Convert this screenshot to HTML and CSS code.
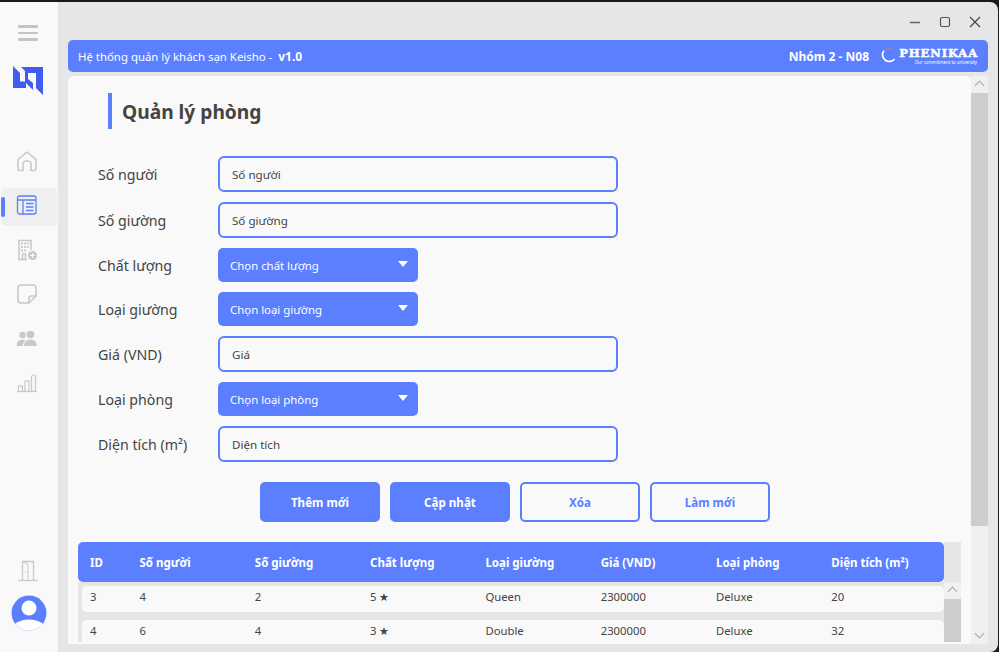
FILE: index.html
```html
<!DOCTYPE html>
<html lang="vi">
<head>
    <meta charset="UTF-8">
    <meta name="viewport" content="width=device-width, initial-scale=1.0">
    <title>Quản lý phòng</title>
    <link rel="stylesheet" href="styles.css">
</head>
<body>
    <div class="window">
        <aside class="sidebar">
            <div class="menu-btn"><span></span><span></span><span></span></div>
            <svg class="logo" width="30" height="30" viewBox="0 0 30 30">
                <path fill="#3f5bf0" d="M0 0 L7 7 V15.5 H13 V22 H0 Z"/>
                <path fill="#3f5bf0" d="M8 1 H30 V29 L23 22 V7 H15 V13 L20 17 V24 L12 16 V5 Z"/>
            </svg>
            <nav class="nav">
                <div class="nav-item">
                    <svg width="22" height="22" viewBox="0 0 22 22" fill="none" stroke="#c8c8c8" stroke-width="1.6"><path d="M2 9.5 L11 2 L20 9.5 V18.5 Q20 20.5 18 20.5 H15 V14 Q15 11 11 11 Q7 11 7 14 V20.5 H4 Q2 20.5 2 18.5 Z" stroke-linejoin="round"/></svg>
                </div>
                <div class="nav-item active">
                    <span class="marker"></span>
                    <svg width="22" height="22" viewBox="0 0 22 22" fill="none" stroke="#5b7fff" stroke-width="1.3"><rect x="1.5" y="2" width="18.5" height="18" rx="2"/><path d="M1.5 6 H20 M7 6 V20 M10 9.5 H17.5 M10 13 H17.5 M10 16.5 H17.5"/></svg>
                </div>
                <div class="nav-item">
                    <svg width="22" height="22" viewBox="0 0 22 22"><path fill="none" stroke="#c8c8c8" stroke-width="1.5" d="M11 20.5 H3 V1.5 H15 V11"/><path stroke="#c8c8c8" stroke-width="2" stroke-dasharray="2 1.2" d="M5 4.5 H13 M5 8 H13 M5 11.5 H11"/><path fill="none" stroke="#c8c8c8" stroke-width="1.5" d="M6.5 20 V15 H9.5 V20"/><circle cx="16.5" cy="16.5" r="4.5" fill="#c8c8c8"/><path stroke="#f9f9f9" stroke-width="1.2" d="M14 16.5 H19 M16.5 14 V19"/></svg>
                </div>
                <div class="nav-item">
                    <svg width="22" height="22" viewBox="0 0 22 22" fill="none" stroke="#c8c8c8" stroke-width="1.6" stroke-linejoin="round"><path d="M5 2 H17 Q20 2 20 5 V13 L13 20 H5 Q2 20 2 17 V5 Q2 2 5 2 Z"/><path d="M20 13 H15.5 Q13 13 13 15.5 V20"/></svg>
                </div>
                <div class="nav-item">
                    <svg width="22" height="22" viewBox="0 0 22 22" fill="#c8c8c8"><circle cx="6.5" cy="7" r="3.2"/><circle cx="14.5" cy="6.5" r="3.8"/><path d="M0.5 18 Q1 11.5 6.5 11.5 Q8.5 11.5 9.5 12.5 Q7 14.5 6.5 18 Z"/><path d="M8 18 Q8.5 11.5 14.5 11.5 Q20.5 11.5 21 18 Z"/></svg>
                </div>
                <div class="nav-item">
                    <svg width="22" height="22" viewBox="0 0 22 22" fill="none" stroke="#c8c8c8" stroke-width="1.2"><path d="M1 19.5 H21"/><rect x="2.5" y="14" width="4" height="5.5"/><rect x="9" y="9" width="4" height="10.5"/><rect x="15.5" y="3" width="4" height="16.5" rx="2"/></svg>
                </div>
            </nav>
            <div class="side-bottom">
                <svg width="22" height="22" viewBox="0 0 22 22" fill="none" stroke="#c8c8c8" stroke-width="1.3"><path d="M0.5 20.5 H19.5"/><path d="M4.5 20.5 V1.5 H15.5 V20.5"/><path d="M4.5 1.5 L10 4 V20.5" stroke-width="1"/><path d="M8 11 V12.5" stroke-width="1"/></svg>
                <svg class="avatar" width="36" height="36" viewBox="0 0 36 36">
                    <defs><clipPath id="av"><circle cx="18" cy="18" r="17.5"/></clipPath></defs>
                    <circle cx="18" cy="18" r="17.5" fill="#5b7fff"/>
                    <circle cx="18" cy="13" r="7.5" fill="#fff"/>
                    <ellipse cx="18" cy="35" rx="17" ry="10.5" fill="#fff" clip-path="url(#av)"/>
                </svg>
            </div>
        </aside>

        <main class="main">
            <div class="titlebar">
                <svg width="12" height="12" viewBox="0 0 12 12"><path stroke="#666" stroke-width="1.3" d="M1 6.5 H11"/></svg>
                <svg width="12" height="12" viewBox="0 0 12 12" fill="none"><rect x="1.5" y="1.5" width="9" height="9" rx="1.5" stroke="#555" stroke-width="1.2"/></svg>
                <svg width="12" height="12" viewBox="0 0 12 12"><path stroke="#444" stroke-width="1.2" d="M1 1 L11 11 M11 1 L1 11"/></svg>
            </div>
            <header class="app-header">
                <div class="app-title">Hệ thống quản lý khách sạn Keisho -&nbsp; <b>v1.0</b></div>
                <div class="app-right">
                    <b>Nhóm 2 - N08</b>
                    <div class="brand">
                        <svg width="16" height="16" viewBox="0 0 16 16" fill="none" stroke-width="1.7"><path stroke="#fff" d="M3 2.5 A6.5 6.5 0 1 0 13.5 11"/><path stroke="#e8744f" stroke-width="1" d="M4.5 2 A6.5 6.5 0 0 1 13 2.5"/></svg>
                        <div class="brand-text">
                            <span class="brand-name">PHENIKAA</span>
                            <span class="brand-sub">Our commitment to university</span>
                        </div>
                    </div>
                </div>
            </header>

            <div class="content">
                <section class="panel">
                    <h1 class="page-title">Quản lý phòng</h1>
                    <form class="room-form">
                        <div class="row"><label>Số người</label><div class="input">Số người</div></div>
                        <div class="row"><label>Số giường</label><div class="input">Số giường</div></div>
                        <div class="row"><label>Chất lượng</label><div class="select">Chọn chất lượng<i></i></div></div>
                        <div class="row"><label>Loại giường</label><div class="select">Chọn loại giường<i></i></div></div>
                        <div class="row"><label>Giá (VND)</label><div class="input">Giá</div></div>
                        <div class="row"><label>Loại phòng</label><div class="select">Chọn loại phòng<i></i></div></div>
                        <div class="row"><label>Diện tích (m²)</label><div class="input">Diện tích</div></div>
                    </form>
                    <div class="actions">
                        <div class="btn">Thêm mới</div>
                        <div class="btn">Cập nhật</div>
                        <div class="btn outline">Xóa</div>
                        <div class="btn outline">Làm mới</div>
                    </div>
                    <div class="table">
                        <div class="table-left">
                            <div class="thead">
                                <span class="col-id">ID</span><span>Số người</span><span>Số giường</span><span>Chất lượng</span><span>Loại giường</span><span>Giá (VND)</span><span>Loại phòng</span><span>Diện tích (m²)</span>
                            </div>
                            <div class="tbody">
                                <div class="tr">
                                    <span class="col-id">3</span><span>4</span><span>2</span><span>5 ★</span><span>Queen</span><span>2300000</span><span>Deluxe</span><span>20</span>
                                </div>
                                <div class="tr">
                                    <span class="col-id">4</span><span>6</span><span>4</span><span>3 ★</span><span>Double</span><span>2300000</span><span>Deluxe</span><span>32</span>
                                </div>
                            </div>
                        </div>
                        <div class="table-scroll">
                            <div class="head-gap"></div>
                            <div class="arrow-up"></div>
                            <div class="thumb"></div>
                        </div>
                    </div>
                </section>
                <div class="scrollbar">
                    <div class="arrow-up"></div>
                    <div class="thumb"></div>
                    <div class="arrow-down"></div>
                </div>
            </div>
        </main>
    </div>
</body>
</html>
```

FILE: styles.css
```css
* {
    box-sizing: border-box;
}

html, body {
    margin: 0;
    height: 100%;
    overflow: hidden;
}

body {
    background-color: #1a1a1a;
    font-family: "Noto Sans", "Open Sans", sans-serif;
    color: #444;
    padding: 2px 1px 2px 0;
}

.window {
    display: flex;
    height: 650px;
    background-color: #e6e6e6;
    border-radius: 0 8px 8px 0;
    overflow: hidden;
}

/* sidebar */
.sidebar {
    width: 58px;
    background-color: #f9f9f9;
    display: flex;
    flex-direction: column;
    align-items: center;
    padding-top: 23px;
}

.menu-btn {
    width: 20px;
    display: flex;
    flex-direction: column;
    gap: 4px;
    margin-left: -2px;
}

.menu-btn span {
    display: block;
    height: 2.5px;
    border-radius: 1px;
    background-color: #c4c4c4;
}

.logo {
    margin-top: 25px;
    margin-left: -2px;
}

.nav {
    margin-top: 48px;
    width: 100%;
    display: flex;
    flex-direction: column;
    gap: 6.5px;
}

.nav-item {
    position: relative;
    height: 38px;
    margin-left: 1px;
    margin-right: 1px;
    display: flex;
    align-items: center;
    justify-content: center;
    padding-right: 4px;
    padding-bottom: 4px;
    border-radius: 5px;
}

.nav-item.active {
    background-color: #efefef;
}

.marker {
    position: absolute;
    left: 0;
    top: 9px;
    width: 4px;
    height: 20px;
    border-radius: 2px;
    background-color: #5b7fff;
}

.side-bottom {
    margin-top: auto;
    padding-bottom: 21px;
    display: flex;
    flex-direction: column;
    align-items: center;
    gap: 13px;
}

/* main area */
.main {
    flex: 1;
    padding: 0 10px 0 10px;
    display: flex;
    flex-direction: column;
    min-width: 0;
}

.titlebar {
    height: 38px;
    display: flex;
    justify-content: flex-end;
    align-items: center;
    gap: 18px;
    padding: 2px 0 0 0;
    margin-right: 7px;
    flex-shrink: 0;
}

.app-header {
    height: 32px;
    flex-shrink: 0;
    background-color: #5b7fff;
    border-radius: 5px;
    color: #fff;
    font-size: 12px;
    display: flex;
    justify-content: space-between;
    align-items: center;
    padding: 0 11px 0 10px;
}

.app-title {
    font-size: 11.4px;
}

.app-title b {
    font-size: 12px;
}

.app-right {
    display: flex;
    align-items: center;
    gap: 12px;
    padding-right: 0;
}

.brand {
    display: flex;
    align-items: center;
    gap: 1px;
}

.brand-text {
    display: flex;
    flex-direction: column;
    align-items: flex-end;
    width: 79px;
}

.brand-name {
    font-family: "DejaVu Serif", serif;
    font-weight: bold;
    font-size: 11.5px;
    line-height: 10px;
    letter-spacing: 0.9px;
    margin-right: -1px;
    -webkit-text-stroke: 0.5px #fff;
}

.brand-sub {
    font-size: 4.4px;
    line-height: 4px;
    margin-top: 2px;
    white-space: nowrap;
}

.content {
    flex: 1;
    display: flex;
    margin-top: 4px;
    min-height: 0;
    margin-bottom: 8px;
}

.panel {
    width: 903px;
    background-color: #f9f9f9;
    border-radius: 5px 5px 0 0;
    overflow: hidden;
    padding: 17px 10px 0 10px;
}

.page-title {
    margin: 0 0 0 30px;
    border-left: 4px solid #5b7fff;
    padding-left: 10px;
    height: 36px;
    font-size: 19.2px;
    line-height: 38px;
    font-weight: bold;
    color: #444;
}

.room-form {
    margin-top: 27px;
    display: flex;
    flex-direction: column;
    gap: 10px;
}

.row {
    display: flex;
    align-items: center;
    padding-left: 20px;
}

.row label {
    width: 120px;
    font-size: 14.2px;
    color: #444;
}

.input {
    width: 400px;
    height: 36px;
    border: 2px solid #5b7fff;
    border-radius: 6px;
    font-size: 11.6px;
    line-height: 34px;
    padding-left: 12px;
    color: #444;
}

.select {
    position: relative;
    width: 200px;
    height: 34px;
    background-color: #5b7fff;
    border-radius: 5px;
    color: #fff;
    font-size: 11.4px;
    line-height: 36px;
    padding-left: 12px;
}

.select i {
    position: absolute;
    right: 10px;
    top: 13px;
    width: 0;
    height: 0;
    border-left: 5.5px solid transparent;
    border-right: 5.5px solid transparent;
    border-top: 6.5px solid #fff;
}

.actions {
    margin-top: 20px;
    display: flex;
    gap: 10px;
    padding-left: 182px;
}

.btn {
    width: 120px;
    height: 40px;
    background-color: #5b7fff;
    border: 2px solid #5b7fff;
    border-radius: 5px;
    color: #fff;
    font-size: 11.6px;
    font-weight: bold;
    line-height: 38px;
    text-align: center;
}

.btn.outline {
    background-color: transparent;
    color: #5b7fff;
}

/* table */
.table {
    margin-top: 20px;
    display: flex;
    margin-right: -1px;
    font-size: 11.3px;
}

.table-left {
    width: 866px;
}

.thead, .tr {
    display: grid;
    grid-template-columns: 57.5px repeat(7, 115.3px);
    align-items: center;
}

.thead {
    height: 40px;
    background-color: #5b7fff;
    border-radius: 5px;
    color: #fff;
    font-size: 11.5px;
    font-weight: bold;
    padding-left: 4px;
}

.col-id {
    padding-left: 8px;
}

.tbody {
    background-color: #e6e6e6;
    padding: 4px 0 0 4px;
    height: 60px;
    overflow: hidden;
    display: flex;
    flex-direction: column;
    gap: 8px;
}

.tr {
    height: 26px;
    background-color: #f9f9f9;
    border-radius: 5px;
    flex-shrink: 0;
    color: #444;
    padding-bottom: 6px;
}

.table-scroll {
    width: 17px;
    background-color: #e6e6e6;
    display: flex;
    flex-direction: column;
}

.head-gap {
    height: 40px;
}

.table-scroll .thumb {
    flex: 1;
    background-color: #cdcdcd;
}

.arrow-up, .arrow-down {
    background-color: #f0f0f0;
    height: 17px;
    position: relative;
    flex-shrink: 0;
}

.arrow-up::after, .arrow-down::after {
    content: "";
    position: absolute;
    left: 5px;
    width: 6px;
    height: 6px;
    border-left: 1px solid #a6a6a6;
    border-top: 1px solid #a6a6a6;
    transform: rotate(45deg);
    top: 6px;
}

.arrow-down::after {
    transform: rotate(225deg);
    top: 3px;
}

.scrollbar {
    width: 17px;
    background-color: #f0f0f0;
    display: flex;
    flex-direction: column;
}

.scrollbar .thumb {
    height: 433px;
    background-color: #cdcdcd;
}

.scrollbar .arrow-down {
    margin-top: auto;
}
```
